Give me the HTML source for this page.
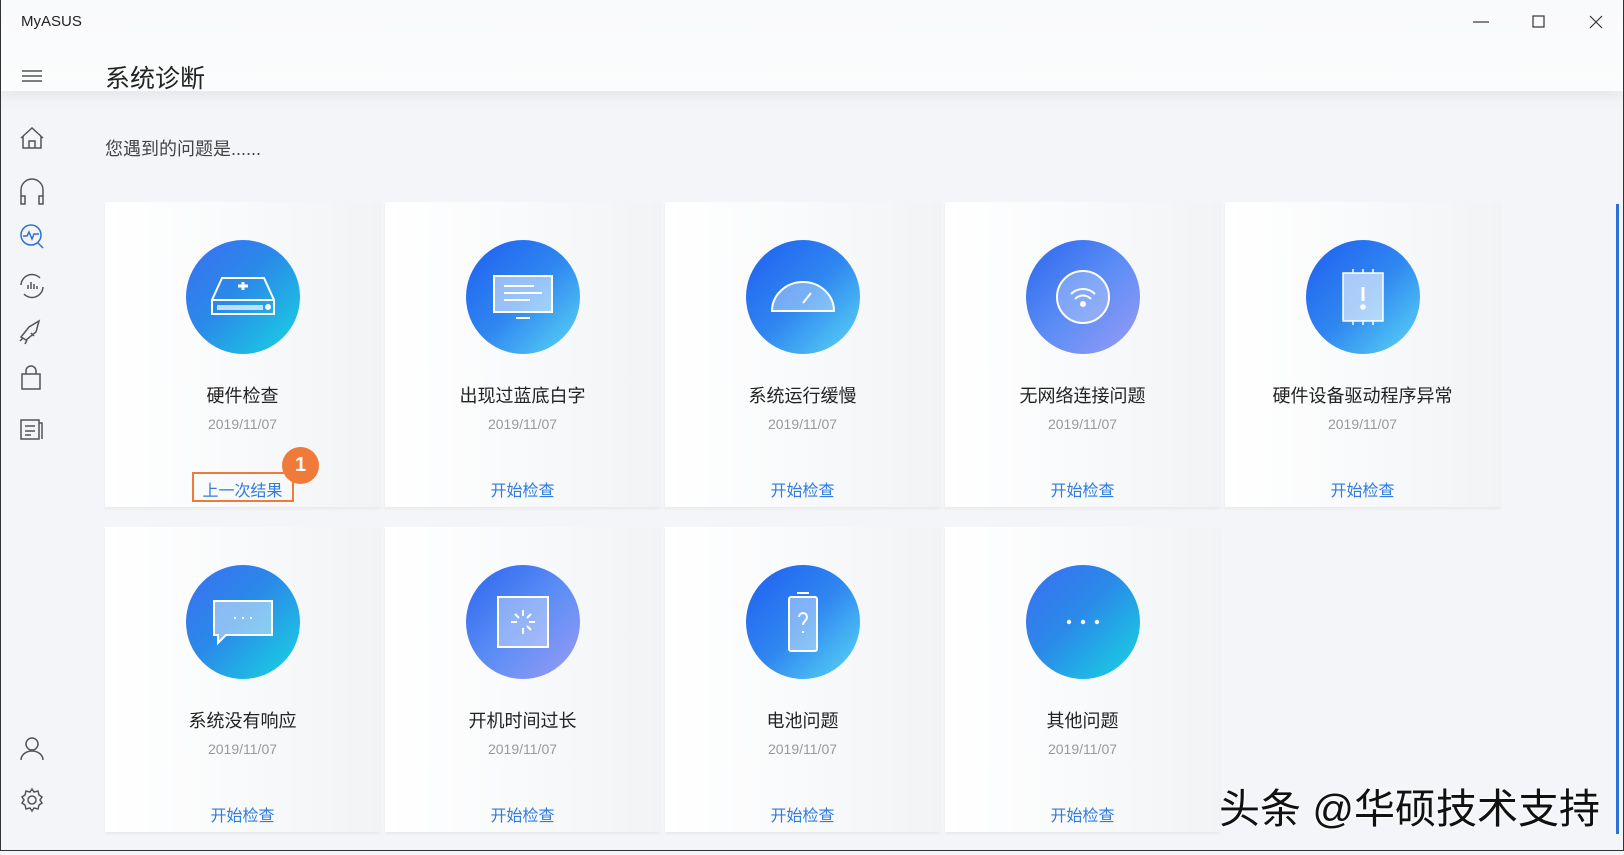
<!DOCTYPE html>
<html><head><meta charset="utf-8"><style>
*{margin:0;padding:0;box-sizing:border-box}
body{width:1624px;height:851px;overflow:hidden;background:#f3f5f8;font-family:"Liberation Sans","Noto Sans CJK SC",sans-serif;position:relative;border-left:1px solid #333;border-right:1px solid #333;border-bottom:1px solid #333}
.hdr{position:absolute;left:0;top:0;width:1622px;height:91px;background:linear-gradient(#f9fafb,#fbfcfd);box-shadow:0 6px 14px rgba(0,0,0,.06)}
.t{position:absolute;white-space:nowrap}
.card{position:absolute;width:275px;height:305px;background:linear-gradient(90deg,#fff 0%,#fafbfc 40%,#f1f3f5 100%);box-shadow:0 2px 3px rgba(0,0,0,.05)}
.circ{position:absolute;left:81px;top:38px;width:114px;height:114px;border-radius:50%;background:linear-gradient(135deg,#3b6ff2 0%,#2a8ae8 45%,#18d6e2 100%);display:flex;align-items:center;justify-content:center}
.circ.p{background:linear-gradient(135deg,#2b66ee 0%,#5b8df5 50%,#9a9bf5 100%)}
.circ.c{background:linear-gradient(135deg,#1f5ff0 0%,#2f86f0 50%,#5ad8f5 100%)}
.ti{position:absolute;left:0;width:275px;top:180px;text-align:center;font-size:18px;color:#222}
.dt{position:absolute;left:0;width:275px;top:214px;text-align:center;font-size:14px;color:#999}
.lk{position:absolute;left:0;width:275px;top:275px;text-align:center;font-size:16px;color:#2f7be0}
</style></head><body>
<div class="hdr"></div>
<div class="t" style="left:20px;top:13px;font-size:15px;color:#222">MyASUS</div>
<svg style="position:absolute;left:1468px;top:14px" width="140" height="16"><line x1="4" y1="8" x2="20" y2="8" stroke="#333" stroke-width="1.2"/><rect x="64" y="2" width="11" height="11" fill="none" stroke="#333" stroke-width="1.2"/><path d="M121 2l12 12M133 2l-12 12" stroke="#333" stroke-width="1.2"/></svg>
<div class="t" style="left:104px;top:59px;font-size:25px;color:#222">系统诊断</div>
<div class="t" style="left:104px;top:135px;font-size:18px;color:#444">您遇到的问题是......</div>
<svg style="position:absolute;left:0;top:55px" width="64" height="800" fill="none" stroke="#555" stroke-width="1.5">
<path d="M21 16h20M21 21h20M21 26h20"/>
<path d="M20 83l11-10 11 10M22 81v12h18V81M28 93v-7h6v7"/>
<path d="M20 141v-6a11 11 0 0122 0v6M20 141h4v8h-4zM38 141h4v8h-4z"/>
<g stroke="#2e6fd8"><circle cx="30" cy="180" r="10"/><path d="M22 181h4l2-4 3 7 2-5h5M37 188l5 5"/></g>
<path d="M20 230a11 11 0 0119-7M42 232a11 11 0 01-19 7M27 234v-4M30 234v-7M33 234v-5M36 234v-3"/>
<path d="M20 282l8-10 10-6-3 11-10 8zM22 283l-3 3M26 285l-2 4M30 278l3 3"/>
<path d="M21 319h18v15H21zM25 319v-3a5 5 0 0110 0v3"/>
<path d="M20 365h18v19H20zM38 368h3v16M24 371h10M24 376h10M24 380h6"/>
<circle cx="31" cy="689" r="6"/><path d="M20 705a11 9 0 0122 0"/>
<circle cx="31" cy="745" r="4"/><path d="M31 734l2 3 4-1 1 4 3 2-2 3 2 3-3 2-1 4-4-1-2 3-2-3-4 1-1-4-3-2 2-3-2-3 3-2 1-4 4 1z"/>
</svg>
<div style="position:absolute;left:1615px;top:204px;width:3px;height:630px;background:#2e6fd8"></div>

<div class="card" style="left:104px;top:202px"><div class="circ"><svg width="70" height="50" fill="none" stroke="#fff" stroke-width="2"><path d="M14 6h42l10 22v14H4V28z M4 28h62"/><rect x="9" y="33" width="46" height="5" fill="#fff" opacity=".7" stroke="none"/><circle cx="60" cy="35" r="2" fill="#fff"/><path d="M35 10v8M30 14h10" stroke-width="3"/></svg></div><div class="ti">硬件检查</div><div class="dt">2019/11/07</div><div class="lk">上一次结果</div></div>
<div class="card" style="left:384px;top:202px"><div class="circ c"><svg width="66" height="50" fill="none" stroke="#fff" stroke-width="2"><rect x="4" y="4" width="58" height="36" fill="rgba(255,255,255,.5)"/><path d="M14 14h30M14 21h38M14 28h26M26 46h14"/></svg></div><div class="ti">出现过蓝底白字</div><div class="dt">2019/11/07</div><div class="lk">开始检查</div></div>
<div class="card" style="left:664px;top:202px"><div class="circ c"><svg width="70" height="40" fill="none" stroke="#fff" stroke-width="2"><path d="M4 34a31 29 0 0162 0z" fill="rgba(255,255,255,.35)"/><path d="M35 26l8-10"/></svg></div><div class="ti">系统运行缓慢</div><div class="dt">2019/11/07</div><div class="lk">开始检查</div></div>
<div class="card" style="left:944px;top:202px"><div class="circ p"><svg width="60" height="60" fill="none" stroke="#fff" stroke-width="2"><circle cx="30" cy="30" r="26" fill="rgba(255,255,255,.25)"/><path d="M18 27a17 17 0 0124 0M22 32a11 11 0 0116 0"/><circle cx="30" cy="37" r="2" fill="#fff"/></svg></div><div class="ti">无网络连接问题</div><div class="dt">2019/11/07</div><div class="lk">开始检查</div></div>
<div class="card" style="left:1224px;top:202px"><div class="circ c"><svg width="50" height="60" fill="none" stroke="#fff" stroke-width="1.5"><rect x="5" y="6" width="40" height="48" fill="rgba(255,255,255,.6)"/><path d="M15 2v4M25 2v4M35 2v4M15 54v4M25 54v4M35 54v4"/><path d="M25 20v14" stroke-width="3"/><circle cx="25" cy="40" r="2" fill="#fff"/></svg></div><div class="ti">硬件设备驱动程序异常</div><div class="dt">2019/11/07</div><div class="lk">开始检查</div></div>

<div class="card" style="left:104px;top:527px"><div class="circ"><svg width="66" height="50" fill="none" stroke="#fff" stroke-width="2"><path d="M4 4h58v34H16l-8 8v-8H4z" fill="rgba(255,255,255,.45)"/><path d="M24 21h2M32 21h2M40 21h2"/></svg></div><div class="ti">系统没有响应</div><div class="dt">2019/11/07</div><div class="lk">开始检查</div></div>
<div class="card" style="left:384px;top:527px"><div class="circ p"><svg width="60" height="60" fill="none" stroke="#fff" stroke-width="2"><rect x="5" y="5" width="50" height="50" fill="rgba(255,255,255,.35)"/><path d="M30 18v6M30 36v6M18 30h6M36 30h6M22 22l4 4M34 34l4 4M38 22l-4 4"/></svg></div><div class="ti">开机时间过长</div><div class="dt">2019/11/07</div><div class="lk">开始检查</div></div>
<div class="card" style="left:664px;top:527px"><div class="circ c"><svg width="40" height="66" fill="none" stroke="#fff" stroke-width="2"><rect x="6" y="8" width="28" height="54" rx="2" fill="rgba(255,255,255,.4)"/><path d="M14 4h12M16 28a4 4 0 118 0c0 4-4 4-4 8M20 42v2"/></svg></div><div class="ti">电池问题</div><div class="dt">2019/11/07</div><div class="lk">开始检查</div></div>
<div class="card" style="left:944px;top:527px"><div class="circ"><svg width="40" height="10" fill="#fff"><circle cx="6" cy="5" r="2.2"/><circle cx="20" cy="5" r="2.2"/><circle cx="34" cy="5" r="2.2"/></svg></div><div class="ti">其他问题</div><div class="dt">2019/11/07</div><div class="lk">开始检查</div></div>

<div style="position:absolute;left:191px;top:472px;width:102px;height:30px;border:2px solid #f07a3a"></div>
<div style="position:absolute;left:281px;top:447px;width:37px;height:37px;border-radius:50%;background:#f07a3a;color:#fff;font-size:20px;font-weight:bold;text-align:center;line-height:37px">1</div>
<div class="t" style="left:1218px;top:775px;font-size:41px;color:#111;text-shadow:0 0 3px #fff,0 0 3px #fff">头条 @华硕技术支持</div>
</body></html>
